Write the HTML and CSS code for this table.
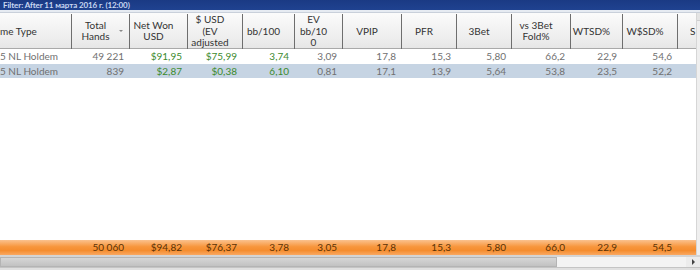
FILE: index.html
```html
<!DOCTYPE html>
<html>
<head>
<meta charset="utf-8">
<link rel="stylesheet" href="styles.css">
</head>
<body>
<div class="app">
  <div class="titlebar"><span>Filter: After 11 марта 2016 г. (12:00)</span></div>
  <div class="strip"></div>
  <div class="main">
    <div class="table">
      <div class="row head">
        <div class="hc left">me Type</div>
        <div class="hc">Total<br>Hands<span class="sort"></span></div>
        <div class="hc">Net Won<br>USD</div>
        <div class="hc">$ USD<br>(EV<br>adjusted</div>
        <div class="hc">bb/100</div>
        <div class="hc">EV<br>bb/10<br>0</div>
        <div class="hc">VPIP</div>
        <div class="hc">PFR</div>
        <div class="hc">3Bet</div>
        <div class="hc">vs 3Bet<br>Fold%</div>
        <div class="hc">WTSD%</div>
        <div class="hc">W$SD%</div>
        <div class="hc last">S</div>
      </div>
      <div class="row data">
        <div class="c left">5 NL Holdem</div>
        <div class="c">49 221</div>
        <div class="c g">$91,95</div>
        <div class="c g">$75,99</div>
        <div class="c g">3,74</div>
        <div class="c">3,09</div>
        <div class="c">17,8</div>
        <div class="c">15,3</div>
        <div class="c">5,80</div>
        <div class="c">66,2</div>
        <div class="c">22,9</div>
        <div class="c">54,6</div>
        <div class="c"></div>
      </div>
      <div class="row data sel">
        <div class="c left">5 NL Holdem</div>
        <div class="c">839</div>
        <div class="c g">$2,87</div>
        <div class="c g">$0,38</div>
        <div class="c g">6,10</div>
        <div class="c">0,81</div>
        <div class="c">17,1</div>
        <div class="c">13,9</div>
        <div class="c">5,64</div>
        <div class="c">53,8</div>
        <div class="c">23,5</div>
        <div class="c">52,2</div>
        <div class="c"></div>
      </div>
      <div class="empty"></div>
      <div class="row total">
        <div class="c left"></div>
        <div class="c">50 060</div>
        <div class="c">$94,82</div>
        <div class="c">$76,37</div>
        <div class="c">3,78</div>
        <div class="c">3,05</div>
        <div class="c">17,8</div>
        <div class="c">15,3</div>
        <div class="c">5,80</div>
        <div class="c">66,0</div>
        <div class="c">22,9</div>
        <div class="c">54,5</div>
        <div class="c"></div>
      </div>
    </div>
    <div class="vscroll"><div class="vbtn"></div></div>
  </div>
  <div class="hscroll">
    <div class="thumb"></div>
    <div class="track"></div>
    <div class="hbtn"><span class="tri"></span></div>
  </div>
  <div class="bottom"></div>
</div>
</body>
</html>
```

FILE: styles.css
```css
* { box-sizing: border-box; }
html, body { margin: 0; padding: 0; }
body {
  width: 700px;
  height: 270px;
  overflow: hidden;
  background: #ffffff;
  font-family: Lato, "Open Sans", sans-serif;
}
.app { display: flex; flex-direction: column; width: 700px; height: 270px; }
.titlebar {
  height: 10px;
  flex: none;
  background: linear-gradient(#1a3a84, #1f4290);
  padding-left: 3px;
}
.titlebar span {
  display: block;
  font-size: 8px;
  font-weight: bold;
  color: #c9d8f2;
  line-height: 10px;
  letter-spacing: -0.1px;
}
.strip {
  height: 3px;
  flex: none;
  background: #e6ebf2;
  border-bottom: 1px solid #c9d0da;
}
.main { flex: 1; display: flex; min-height: 0; }
.table { flex: 1; display: flex; flex-direction: column; min-width: 0; overflow: hidden; }
.row {
  display: grid;
  flex: none;
  grid-template-columns: 72px 58px 58px 55px 52px 48px 59px 55px 55px 59px 52px 55px 40px;
}
.head {
  height: 36px;
  background: linear-gradient(#fbfbfb, #eeeeee 70%, #e6e6e6);
  border-bottom: 1px solid #a9a9a9;
}
.hc {
  position: relative;
  display: flex;
  align-items: center;
  justify-content: center;
  text-align: center;
  padding-right: 10px;
  font-size: 10px;
  line-height: 11.5px;
  color: #333;
  border-right: 1px solid #6e6e6e;
  margin-top: 1px;
}
.hc.left { justify-content: flex-start; padding-left: 0; }
.hc.last { border-right: none; justify-content: flex-start; padding-left: 12px; }
.sort {
  position: absolute;
  right: 6px;
  top: 16px;
  width: 0; height: 0;
  border-left: 2px solid transparent;
  border-right: 2px solid transparent;
  border-top: 2px solid #888;
}
.data { height: 15px; }
.data.sel { background: #c6d4e3; height: 14px; }
.c {
  font-size: 10px;
  line-height: 15px;
  color: #707070;
  text-align: right;
  padding-right: 6px;
  white-space: nowrap;
  overflow: hidden;
}
.sel .c { line-height: 14px; }
.c.left { text-align: left; padding: 0; }
.c.g { color: #3c8a2e; }
.empty { flex: 1; }
.total {
  height: 15px;
  background: linear-gradient(#fbc28e, #f7963c 45%, #f58d2f 70%, #f9a862);
}
.total .c { color: #5b3205; line-height: 15px; }
.vscroll {
  width: 4px;
  background: #efefef;
  border-left: 1px solid #d6d6d6;
}
.vbtn { height: 8px; border-bottom: 1px solid #cfcfcf; background: #e4e4e4; }
.hscroll {
  height: 12px;
  flex: none;
  display: flex;
  border-top: 2px solid #d4d4d4;
  background: #f2f2f2;
}
.thumb {
  width: 557px;
  background: linear-gradient(#d6d6d6, #c2c2c2);
  border: 1px solid #b4b4b4;
}
.track { flex: 1; background: #f3f3f3; }
.hbtn {
  width: 14px;
  display: flex;
  align-items: center;
  justify-content: center;
  background: #ececec;
}
.tri {
  width: 0; height: 0;
  border-top: 3px solid transparent;
  border-bottom: 3px solid transparent;
  border-left: 3px solid #444;
}
.bottom { height: 3px; flex: none; background: #e0e0e0; border-top: 1px solid #c4c4c4; }
```
